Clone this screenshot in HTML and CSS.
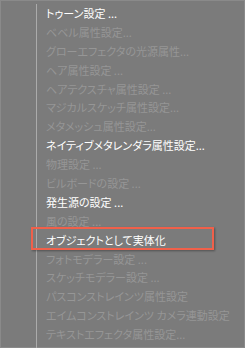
FILE: index.html
```html
<!DOCTYPE html>
<html lang="ja">
<head>
  <meta charset="UTF-8" />
  <title>Menu</title>
  <link rel="stylesheet" href="styles.css">
</head>
<body>
  <div class="menu">
    <ul class="items">
      <li class="on">トゥーン設定 ...</li>
      <li>ベベル属性設定...</li>
      <li>グローエフェクタの光源属性...</li>
      <li>ヘア属性設定 ...</li>
      <li>ヘアテクスチャ属性設定 ...</li>
      <li>マジカルスケッチ属性設定...</li>
      <li>メタメッシュ属性設定...</li>
      <li class="on">ネイティブメタレンダラ属性設定...</li>
      <li>物理設定 ...</li>
      <li>ビルボードの設定 ...</li>
      <li class="on">発生源の設定 ...</li>
      <li>風の設定 ...</li>
      <li class="on picked">オブジェクトとして実体化</li>
      <li>フォトモデラー設定 ...</li>
      <li>スケッチモデラー設定 ...</li>
      <li>パスコンストレインツ属性設定</li>
      <li>エイムコンストレインツ カメラ連動設定</li>
      <li>テキストエフェクタ属性設定...</li>
    </ul>
  </div>
</body>
</html>
```

FILE: styles.css
```css
html, body {
  margin: 0;
  background: #7b7b7b;
}

.menu {
  width: 245px;
  height: 348px;
  box-sizing: border-box;
  border: 1px solid #8a8a8a;
  padding: 3px 0 0 35px;
  font-family: "Noto Sans CJK JP", "Noto Sans", sans-serif;
  font-size: 11px;
  font-feature-settings: "palt";
  color: #969696;
}

.items {
  list-style: none;
  margin: 0;
  padding: 0 0 8px 9px;
  border-left: 1px solid #ababab;
}

.items li {
  height: 18.9px;
  line-height: 18px;
  white-space: nowrap;
}

.items li.on {
  color: #ffffff;
}

.items li.picked {
  position: relative;
}

.items li.picked::before {
  content: "";
  position: absolute;
  left: -15px;
  top: -4px;
  width: 179px;
  height: 19px;
  border: 2px solid #f0604a;
  box-shadow: 1px 1px 2px rgba(0, 0, 0, 0.35);
}
```
